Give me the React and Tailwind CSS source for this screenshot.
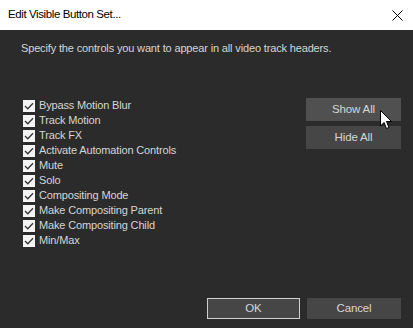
import React from "react";

const items = [
  "Bypass Motion Blur",
  "Track Motion",
  "Track FX",
  "Activate Automation Controls",
  "Mute",
  "Solo",
  "Compositing Mode",
  "Make Compositing Parent",
  "Make Compositing Child",
  "Min/Max",
];

const Check = () => (
  <span className="w-[12px] h-[12px] bg-[#f4f4f4] flex items-center justify-center shrink-0">
    <svg width="10" height="10" viewBox="0 0 10 10">
      <path d="M1 5 L3.8 7.8 L9 2.2" fill="none" stroke="#333" strokeWidth="1.3" />
    </svg>
  </span>
);

const Cursor = () => (
  <svg className="absolute left-[380px] top-[110px]" width="13" height="20" viewBox="0 0 13 20">
    <path d="M0.5 0.5 L0.5 16 L4 12.5 L6.5 18.5 L9 17.5 L6.5 11.5 L11.5 11.5 Z" fill="#fff" stroke="#000" strokeWidth="1" />
  </svg>
);

export default function App() {
  return (
    <div className="relative w-[413px] h-[328px] flex flex-col bg-[#2b2b2b] font-['Liberation_Sans',Arial,sans-serif] text-[11px] tracking-[-0.15px] text-[#d6d6d6] overflow-hidden">
      {/* Title bar */}
      <div className="h-[30px] bg-white flex items-center justify-between pl-[8px] pr-[10px] shrink-0">
        <span className="text-black text-[11.5px] tracking-[-0.4px]">Edit Visible Button Set...</span>
        <svg width="11" height="11" viewBox="0 0 11 11">
          <path d="M0.5 0.5 L10.5 10.5 M10.5 0.5 L0.5 10.5" stroke="#000" strokeWidth="1" />
        </svg>
      </div>

      <div className="flex-1 flex flex-col">
        <p className="pl-[21px] pt-[11px] leading-[15px]">
          Specify the controls you want to appear in all video track headers.
        </p>

        <div className="flex mt-[42px]">
          <div className="flex flex-col pl-[23px]">
            {items.map((item) => (
              <div key={item} className="h-[15px] flex items-center gap-[4px]">
                <Check />
                <span className="leading-[15px]">{item}</span>
              </div>
            ))}
          </div>
          <div className="ml-auto mr-[12px] flex flex-col gap-[5px]">
            <button className="w-[95px] h-[23px] bg-[#505050] text-[#d6d6d6] text-[11.5px]">Show All</button>
            <button className="w-[95px] h-[23px] bg-[#464646] text-[#d6d6d6] text-[11.5px]">Hide All</button>
          </div>
        </div>

        <div className="mt-auto mb-[9px] mr-[12px] flex justify-end gap-[7px]">
          <button className="w-[93px] h-[21px] bg-[#464646] border border-[#d0d0d0] text-[#d6d6d6] text-[11.5px]">OK</button>
          <button className="w-[94px] h-[21px] bg-[#464646] text-[#d6d6d6] text-[11.5px]">Cancel</button>
        </div>
      </div>

      <Cursor />
    </div>
  );
}
